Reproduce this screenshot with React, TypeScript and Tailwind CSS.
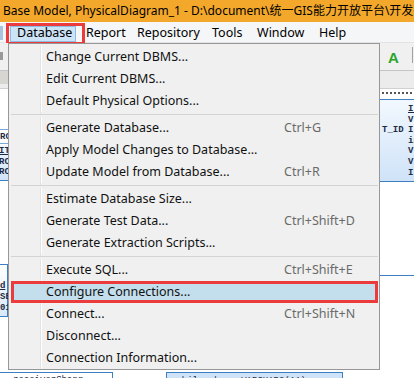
import React from 'react';

type Item = { label: string; shortcut?: string; active?: boolean } | 'sep';

const MENU: Item[] = [
  { label: 'Change Current DBMS...' },
  { label: 'Edit Current DBMS...' },
  { label: 'Default Physical Options...' },
  'sep',
  { label: 'Generate Database...', shortcut: 'Ctrl+G' },
  { label: 'Apply Model Changes to Database...' },
  { label: 'Update Model from Database...', shortcut: 'Ctrl+R' },
  'sep',
  { label: 'Estimate Database Size...' },
  { label: 'Generate Test Data...', shortcut: 'Ctrl+Shift+D' },
  { label: 'Generate Extraction Scripts...' },
  'sep',
  { label: 'Execute SQL...', shortcut: 'Ctrl+Shift+E' },
  { label: 'Configure Connections...', active: true },
  { label: 'Connect...', shortcut: 'Ctrl+Shift+N' },
  { label: 'Disconnect...' },
  { label: 'Connection Information...' },
];

const TOP_MENUS = [
  { label: 'Database', w: 'w-[66px] mr-[4px]', on: true },
  { label: 'Report', w: 'w-[51px]' },
  { label: 'Repository', w: 'w-[75px]' },
  { label: 'Tools', w: 'w-[45px]' },
  { label: 'Window', w: 'w-[62px]' },
  { label: 'Help', w: 'w-[40px]' },
];

const ui = "font-['Noto_Sans','Noto_Sans_CJK_SC',sans-serif]";
const mono = "font-['Liberation_Mono',monospace] text-[9px] leading-[10.6px] font-bold text-[#1c2a44]";

const App: React.FC = () => {
  return (
    <div className={`relative w-[414px] h-[378px] overflow-hidden bg-white flex flex-col ${ui}`}>
      {/* title bar */}
      <div className="shrink-0 h-[22px] bg-[#f4a82b] pl-[3px] flex items-center text-[12px] text-black whitespace-nowrap overflow-hidden">
        Base Model, PhysicalDiagram_1 - D:\document\统一GIS能力开放平台\开发平台
      </div>

      {/* menu bar */}
      <div className="shrink-0 h-[21px] bg-[#f5f6f7] border-b border-[#e3e3e3] flex items-center pl-[10px] text-[12.5px] text-black relative">
        <div className="absolute left-0 top-[4px] w-[3px] h-[14px] bg-[#a9c4de]" />
        {TOP_MENUS.map(m => (
          <div
            key={m.label}
            className={`${m.w} h-[16px] mt-[3px] pl-[6px] flex items-center ${m.on ? 'bg-[#cde4f7] border border-[#8dbbe3] pl-[5px]' : ''}`}
          >
            {m.label}
          </div>
        ))}
        {/* annotation box */}
        <div className="absolute left-[6px] top-[1px] w-[79px] h-[22px] border-[3px] border-[#ec3b3d]" />
      </div>

      {/* workspace */}
      <div className="relative flex-1 flex flex-col">
        <div className="shrink-0 h-[27px] bg-[#f0f0f0] relative">
          <div className="absolute left-0 top-[9px] w-[3px] h-[8px] bg-[#9a9a9a]" />
          <span className="absolute left-[388px] top-[4px] text-[15px] font-black text-[#2aa52a] font-['Liberation_Sans',sans-serif]">A</span>
          <div className="absolute left-[412px] top-[4px] w-px h-[16px] bg-[#a0a0a0]" />
        </div>
        <div className="shrink-0 h-[19px] bg-[#ececec] border-t border-[#c4c4c4] border-b border-b-[#d0d0d0] relative">
          <div className="absolute left-0 top-0 w-[8px] h-[13px] bg-[#d8d6d1]" />
        </div>

        {/* diagram canvas */}
        <div className="relative flex-1 bg-white">
          <div className="absolute left-[382px] top-[3px] w-[30px] h-[2px] border-t-2 border-dotted border-[#555]" />

          {/* right table */}
          <div className="absolute left-[300px] top-[10px] w-[130px] h-[83px] border-y border-[#3d7fc0] bg-gradient-to-b from-[#f2f8fe] to-[#cfe3f8]">
            <div className={`${mono} absolute left-[108px] top-[4px]`}>
              <div className="underline">IL</div>
              <div>V.</div>
              <div>IL</div>
              <div>in</div>
              <div>V.</div>
              <div>V.</div>
              <div>IL</div>
            </div>
            <div className={`${mono} absolute left-[82px] top-[25px]`}>T_ID</div>
          </div>

          {/* left tables */}
          <div className="absolute left-[-40px] top-[40px] w-[48px] h-[15px] border-y border-[#7aa9d6] bg-white">
            <div className={`${mono} absolute left-[40px] top-[2px]`}>RC</div>
          </div>
          <div className="absolute left-[-40px] top-[56px] w-[48px] h-[36px] border-b border-[#3d7fc0] bg-gradient-to-b from-[#f2f8fe] to-[#cfe3f8]">
            <div className={`${mono} absolute left-[39px] top-[1px]`}>
              <div className="underline">ITE</div>
              <div>RC</div>
              <div>RC</div>
            </div>
          </div>
          <div className="absolute left-[-40px] top-[175px] w-[48px] h-[53px] border border-[#3d7fc0] bg-gradient-to-b from-[#ffffff] to-[#d9e9f9]">
            <div className={`${mono} absolute left-[39px] top-[16px] leading-[11px]`}>
              <div className="underline">d</div>
              <div>SE</div>
              <div>01</div>
            </div>
          </div>

          <div className="absolute left-[380px] top-[186px] w-[40px] h-px bg-[#3d7fc0]" />

          {/* bottom tables */}
          <div className="absolute left-[-2px] top-[283px] w-[115px] h-[30px] border border-[#3d7fc0] bg-white">
            <div className={`${mono} absolute left-[14px] top-[2px] font-normal`}>receiverShang</div>
          </div>
          <div className="absolute left-[166px] top-[283px] w-[177px] h-[30px] border border-[#3d7fc0] bg-[#cfe3f8]">
            <div className={`${mono} absolute left-[4px] top-[3px] font-normal`}>mobile_phone VARCHAR2(11)</div>
          </div>
        </div>

        {/* dropdown menu */}
        <div className="absolute left-[8px] top-0 w-[372px] h-[327px] bg-[#f0f0f0] border border-[#979797] pt-[2px] text-[12.5px] text-[#111]">
          {MENU.map((it, i) =>
            it === 'sep' ? (
              <div key={i} className="h-[5px] flex items-start">
                <div className="w-[32px] h-[2px] border-r border-[#e3e3e3]" />
                <div className="mt-[2px] h-px flex-1 bg-[#d4d4d4] -ml-[30px] mr-[1px]" />
              </div>
            ) : (
              <div
                key={i}
                className={`h-[22px] flex items-center ${it.active ? 'ml-[2px] mr-[1px] bg-[#c3deec] shadow-[inset_0_0_0_3px_#ec3b3d]' : ''}`}
              >
                <div className={`h-full shrink-0 ${it.active ? 'w-[30px]' : 'w-[32px] border-r border-[#e3e3e3] shadow-[1px_0_0_#ffffff]'}`} />
                <div className="w-[243px] shrink-0 pl-[5px] whitespace-nowrap">{it.label}</div>
                {it.shortcut && <div className="text-[#6a6a6a] whitespace-nowrap">{it.shortcut}</div>}
              </div>
            )
          )}
        </div>
      </div>
    </div>
  );
};

export default App;
